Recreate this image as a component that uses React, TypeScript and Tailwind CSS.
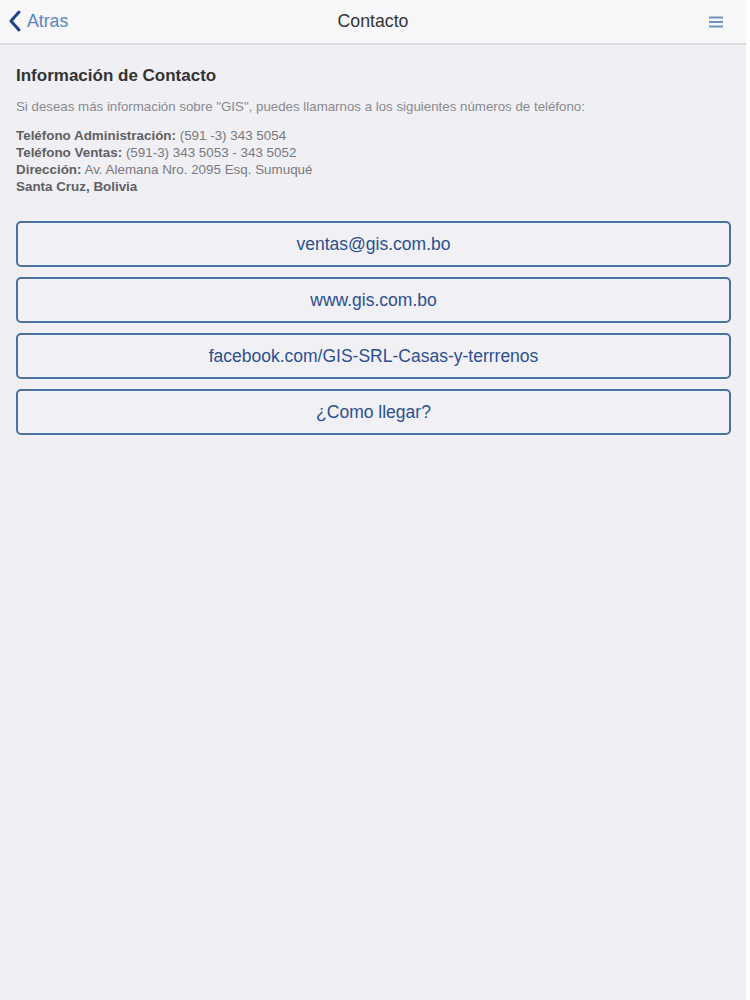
const links = [
  "ventas@gis.com.bo",
  "www.gis.com.bo",
  "facebook.com/GIS-SRL-Casas-y-terrrenos",
  "¿Como llegar?",
]

export default function App() {
  return (
    <div className="flex min-h-[1000px] w-[750px] bg-white font-['Liberation_Sans',Arial,sans-serif]">
      <div className="flex w-[746px] flex-col bg-[#efeff4]">
        <header className="flex h-[45px] shrink-0 items-center border-b-2 border-[#dcdce0] bg-[#f7f7f9] px-2">
          <div className="flex w-[120px] items-center gap-[5px]">
            <svg width="14" height="22" viewBox="0 0 14 22" fill="none">
              <path d="M11 2L3 11L11 20" stroke="#1f3f91" strokeWidth="3" strokeLinecap="round" strokeLinejoin="round" />
            </svg>
            <span className="text-[17.7px] text-[#5a85c2]">Atras</span>
          </div>
          <div className="flex-1 text-center text-[17.7px] text-[#333]">Contacto</div>
          <div className="flex w-[120px] justify-end pr-[15px]">
            <svg width="14" height="12" viewBox="0 0 14 12">
              <rect x="0" y="0.5" width="14" height="2" fill="#6f93bf" />
              <rect x="0" y="5" width="14" height="2" fill="#6f93bf" />
              <rect x="0" y="9.5" width="14" height="2" fill="#6f93bf" />
            </svg>
          </div>
        </header>

        <main className="px-[16px] pr-[15px]">
          <h1 className="mt-[20px] text-[17px] leading-[22px] font-bold text-[#333]">Información de Contacto</h1>
          <p className="mt-[11px] text-[13.3px] leading-[17px] text-[#8a8a8e]">
            Si deseas más información sobre "GIS", puedes llamarnos a los siguientes números de teléfono:
          </p>
          <div className="mt-[12px] text-[13.4px] leading-[17px] text-[#7a7a7e]">
            <div>
              <b className="text-[#606064]">Teléfono Administración:</b> (591 -3) 343 5054
            </div>
            <div>
              <b className="text-[#606064]">Teléfono Ventas:</b> (591-3) 343 5053 - 343 5052
            </div>
            <div>
              <b className="text-[#606064]">Dirección:</b> Av. Alemana Nro. 2095 Esq. Sumuqué
            </div>
            <div>
              <b className="text-[#606064]">Santa Cruz, Bolivia</b>
            </div>
          </div>

          <div className="mt-[26px] flex flex-col gap-[10px]">
            {links.map((l) => (
              <button
                key={l}
                className="flex h-[46px] items-center justify-center rounded-[5px] border-2 border-[#4c70a8] bg-[#f1f1f5] text-[17.5px] text-[#2c4f92]"
              >
                {l}
              </button>
            ))}
          </div>
        </main>
      </div>
    </div>
  )
}
